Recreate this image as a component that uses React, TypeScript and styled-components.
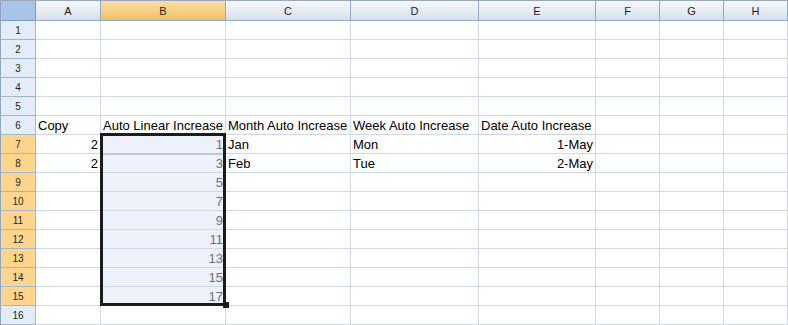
import React from "react";
import styled, { createGlobalStyle, css } from "styled-components";

const GlobalStyle = createGlobalStyle`
  html, body { margin: 0; padding: 0; background: #ffffff; }
  body { font-family: "Liberation Sans", Arial, sans-serif; }
`;

type Align = "left" | "right";

interface CellData {
  text: string;
  align?: Align;
}

const COLUMNS = [
  { key: "A", width: 65 },
  { key: "B", width: 125 },
  { key: "C", width: 125 },
  { key: "D", width: 128 },
  { key: "E", width: 117 },
  { key: "F", width: 64 },
  { key: "G", width: 64 },
  { key: "H", width: 64 },
];

const ROW_COUNT = 16;
const SELECTED_COL = "B";
const SEL_FIRST_ROW = 7;
const SEL_LAST_ROW = 15;

const DATA: Record<string, CellData> = {
  A6: { text: "Copy" },
  B6: { text: "Auto Linear Increase" },
  C6: { text: "Month Auto Increase" },
  D6: { text: "Week Auto Increase" },
  E6: { text: "Date Auto Increase" },
  A7: { text: "2", align: "right" },
  B7: { text: "1", align: "right" },
  C7: { text: "Jan" },
  D7: { text: "Mon" },
  E7: { text: "1-May", align: "right" },
  A8: { text: "2", align: "right" },
  B8: { text: "3", align: "right" },
  C8: { text: "Feb" },
  D8: { text: "Tue" },
  E8: { text: "2-May", align: "right" },
  B9: { text: "5", align: "right" },
  B10: { text: "7", align: "right" },
  B11: { text: "9", align: "right" },
  B12: { text: "11", align: "right" },
  B13: { text: "13", align: "right" },
  B14: { text: "15", align: "right" },
  B15: { text: "17", align: "right" },
};

const Sheet = styled.div<{ $columns: string }>`
  display: grid;
  grid-template-columns: 35px ${(p) => p.$columns};
  grid-template-rows: 20px repeat(${ROW_COUNT}, 19px);
  width: max-content;
  border-left: 1px solid #8fa4be;
  border-top: 1px solid #9aa8ba;
  background: #ffffff;
`;

const Placed = styled.div<{ $row: number; $col: number }>`
  grid-row: ${(p) => p.$row};
  grid-column: ${(p) => p.$col};
  box-sizing: border-box;
`;

const Corner = styled(Placed)`
  background: #a9c4e9;
  border-right: 1px solid #7b9ebd;
  border-bottom: 1px solid #7b9ebd;
`;

const ColHeader = styled(Placed)<{ $selected: boolean }>`
  display: flex;
  align-items: center;
  justify-content: center;
  font-family: "Liberation Sans", Arial, sans-serif;
  font-size: 11px;
  color: #1e1e1e;
  border-right: 1px solid #8eaacb;
  border-bottom: 1px solid #8eaacb;
  background: linear-gradient(#f6f8fb 0%, #e9edf4 45%, #d9e0ea 100%);
  ${(p) =>
    p.$selected &&
    css`
      background: linear-gradient(#f9dda8 0%, #f6d28a 45%, #f0c05e 100%);
    `}
`;

const RowHeader = styled(Placed)<{ $selected: boolean }>`
  display: flex;
  align-items: center;
  justify-content: center;
  font-family: "Liberation Sans", Arial, sans-serif;
  font-size: 10px;
  color: #1e1e1e;
  background: ${(p) => (p.$selected ? "#ffd58d" : "#e4ecf7")};
  border-right: 1px solid #9eb6ce;
  border-bottom: 1px solid #9eb6ce;
`;

const Cell = styled(Placed)<{
  $align: Align;
  $selected: boolean;
  $dividerBelow: boolean;
  $dividerAbove: boolean;
}>`
  display: flex;
  align-items: flex-end;
  justify-content: ${(p) => (p.$align === "right" ? "flex-end" : "flex-start")};
  padding: 0 2px 1px 2px;
  overflow: hidden;
  white-space: nowrap;
  font-family: "Liberation Sans", Arial, sans-serif;
  font-size: 13px;
  line-height: 15px;
  color: ${(p) => (p.$selected ? "#707070" : "#000000")};
  background: ${(p) => (p.$selected ? "#edf1fa" : "#ffffff")};
  border-right: 1px solid #d0d7e5;
  border-bottom: 1px solid ${(p) => (p.$dividerBelow ? "#c6cad6" : "#d0d7e5")};
  ${(p) =>
    p.$dividerAbove &&
    css`
      box-shadow: inset 0 1px 0 #c6cad6;
    `}
`;

const Selection = styled.div<{ $col: number; $from: number; $to: number }>`
  grid-column: ${(p) => p.$col};
  grid-row: ${(p) => p.$from} / ${(p) => p.$to};
  margin: -2px 0 0 -1px;
  border: 3px solid #1c1c1c;
  z-index: 2;
  position: relative;
  pointer-events: none;
`;

const FillHandle = styled.div`
  position: absolute;
  right: -6px;
  bottom: -5px;
  width: 6px;
  height: 6px;
  background: #1c1c1c;
`;

export default function App() {
  const columnsTemplate = COLUMNS.map((c) => `${c.width}px`).join(" ");
  const selColIndex = COLUMNS.findIndex((c) => c.key === SELECTED_COL);
  const rows = Array.from({ length: ROW_COUNT }, (_, i) => i + 1);

  return (
    <>
      <GlobalStyle />
      <Sheet $columns={columnsTemplate}>
        <Corner $row={1} $col={1} />
        {COLUMNS.map((c, ci) => (
          <ColHeader key={c.key} $row={1} $col={ci + 2} $selected={c.key === SELECTED_COL}>
            {c.key}
          </ColHeader>
        ))}
        {rows.map((r) => {
          const rowSelected = r >= SEL_FIRST_ROW && r <= SEL_LAST_ROW;
          return (
            <React.Fragment key={r}>
              <RowHeader $row={r + 1} $col={1} $selected={rowSelected}>
                {r}
              </RowHeader>
              {COLUMNS.map((c, ci) => {
                const id = `${c.key}${r}`;
                const data = DATA[id];
                const inSel = rowSelected && c.key === SELECTED_COL;
                return (
                  <Cell
                    key={id}
                    $row={r + 1}
                    $col={ci + 2}
                    $align={data?.align ?? "left"}
                    $selected={inSel}
                    $dividerBelow={inSel && r === SEL_FIRST_ROW}
                    $dividerAbove={inSel && r === SEL_FIRST_ROW + 1}
                  >
                    {data?.text}
                  </Cell>
                );
              })}
            </React.Fragment>
          );
        })}
        <Selection $col={selColIndex + 2} $from={SEL_FIRST_ROW + 1} $to={SEL_LAST_ROW + 2}>
          <FillHandle />
        </Selection>
      </Sheet>
    </>
  );
}
